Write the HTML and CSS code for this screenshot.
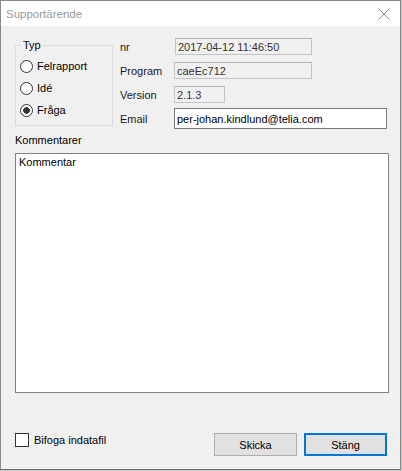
FILE: index.html
```html
<!DOCTYPE html>
<html lang="sv">
<head>
<meta charset="utf-8">
<title>Supportärende</title>
<link rel="stylesheet" href="styles.css">
</head>
<body>
<div class="window">
  <div class="titlebar">
    <span class="title">Supportärende</span>
    <svg class="close" width="12" height="12" viewBox="0 0 12 12"><path d="M0.5 0.5 L11.5 11.5 M11.5 0.5 L0.5 11.5" stroke="#8f8f8f" stroke-width="1" fill="none"/></svg>
  </div>
  <div class="client">
    <div class="top">
      <fieldset class="group">
        <legend>Typ</legend>
        <label class="radio"><input type="radio" name="typ"><span>Felrapport</span></label>
        <label class="radio"><input type="radio" name="typ"><span>Idé</span></label>
        <label class="radio"><input type="radio" name="typ" checked><span>Fråga</span></label>
      </fieldset>
      <div class="info">
        <div class="lbl row1">nr</div>
        <div class="field ro w-nr row1">2017-04-12 11:46:50</div>
        <div class="lbl row2">Program</div>
        <div class="field ro w-prog row2">caeEc712</div>
        <div class="lbl row3">Version</div>
        <div class="field ro w-ver row3">2.1.3</div>
        <div class="lbl lbl-email">Email</div>
        <div class="field email">per-johan.kindlund@telia.com</div>
      </div>
    </div>
    <div class="comments-label">Kommentarer</div>
    <textarea class="comments">Kommentar</textarea>
    <div class="bottom">
      <label class="check"><input type="checkbox"><span>Bifoga indatafil</span></label>
      <div class="buttons">
        <button class="btn">Skicka</button>
        <button class="btn btn-default">Stäng</button>
      </div>
    </div>
  </div>
</div>
</body>
</html>
```
FILE: styles.css
```css
html, body {
  margin: 0;
  padding: 0;
}
body {
  background: #c9c9c9;
  width: 402px;
  height: 471px;
  overflow: hidden;
  font-family: "Liberation Sans", Arial, sans-serif;
  font-size: 11px;
  color: #000;
}
.window {
  width: 401px;
  height: 470px;
  box-sizing: border-box;
  border: 1px solid #8a8a8a;
  border-bottom-color: #6a6a6a;
  background: #f0f0f0;
  display: flex;
  flex-direction: column;
}
.titlebar {
  height: 25px;
  flex: none;
  background: #fff;
  display: flex;
  align-items: center;
  justify-content: space-between;
  padding: 0 10px 0 5px;
}
.title {
  font-size: 11.5px;
  color: #999;
  line-height: 14px;
}
.close {
  display: block;
  margin-top: 1px;
}
.client {
  flex: 1;
  display: flex;
  flex-direction: column;
  padding: 0 13px 13px 13px;
}
.top {
  display: flex;
  align-items: flex-start;
  margin-top: 12px;
}
.group {
  margin: 0 0 0 1px;
  width: 98px;
  height: 88px;
  box-sizing: border-box;
  border: 1px solid #dcdcdc;
  padding: 0 0 0 4px;
  min-width: 0;
}
.group legend {
  margin-left: 1px;
  padding: 0 2px;
  line-height: 14px;
  font-size: 11px;
}
.radio {
  display: flex;
  align-items: center;
  height: 22px;
}
.radio:first-of-type {
  margin-top: 3px;
}
.radio input {
  appearance: none;
  -webkit-appearance: none;
  margin: 0 4px 0 0;
  width: 13px;
  height: 13px;
  box-sizing: border-box;
  border: 1px solid #333;
  border-radius: 50%;
  background: #fff;
}
.radio input:checked {
  background: radial-gradient(circle, #333 0 3px, #fff 3.6px);
}
.info {
  margin-left: 7px;
  display: grid;
  grid-template-columns: 54px auto;
  grid-template-rows: 24px 24px 22px 21px;
  align-items: start;
}
.lbl {
  display: flex;
  align-items: center;
  height: 17px;
  color: #1a1a1a;
}
.lbl-email {
  height: 21px;
}
.field {
  box-sizing: border-box;
  display: flex;
  align-items: center;
  padding-left: 2px;
  white-space: nowrap;
}
.ro {
  height: 17px;
  border: 1px solid #c4c4c4;
  border-top-color: #b4b4b4;
  background: #f0f0f0;
  color: #333;
}
.w-nr { width: 137px; margin-left: 1px; }
.w-prog { width: 138px; }
.w-ver { width: 51px; }
.email {
  height: 21px;
  width: 213px;
  border: 1px solid #7a7a7a;
  background: #fff;
}
.comments-label {
  margin-top: 4px;
  line-height: 14px;
  padding-left: 1px;
}
.comments {
  margin: 6px 0 0 1px;
  width: 374px;
  height: 240px;
  box-sizing: border-box;
  border: 1px solid #828282;
  background: #fff;
  font-family: "Liberation Sans", Arial, sans-serif;
  font-size: 11px;
  line-height: 14px;
  padding: 1px 3px;
  resize: none;
  overflow: hidden;
  color: #000;
  outline: none;
}
.bottom {
  margin-top: auto;
  display: flex;
  align-items: flex-start;
  justify-content: space-between;
}
.check {
  display: flex;
  align-items: center;
  margin: -1px 0 0 1px;
  height: 15px;
}
.check input {
  appearance: none;
  -webkit-appearance: none;
  margin: 0 5px 0 0;
  width: 14px;
  height: 14px;
  box-sizing: border-box;
  border: 1px solid #333;
  background: #fff;
}
.buttons {
  display: flex;
  gap: 7px;
}
.btn {
  width: 83px;
  height: 23px;
  box-sizing: border-box;
  border: 1px solid #adadad;
  background: #e1e1e1;
  font-family: "Liberation Sans", Arial, sans-serif;
  font-size: 11px;
  color: #000;
  padding: 0;
  margin: 0;
}
.btn-default {
  border: 2px solid #0078d7;
}
```
